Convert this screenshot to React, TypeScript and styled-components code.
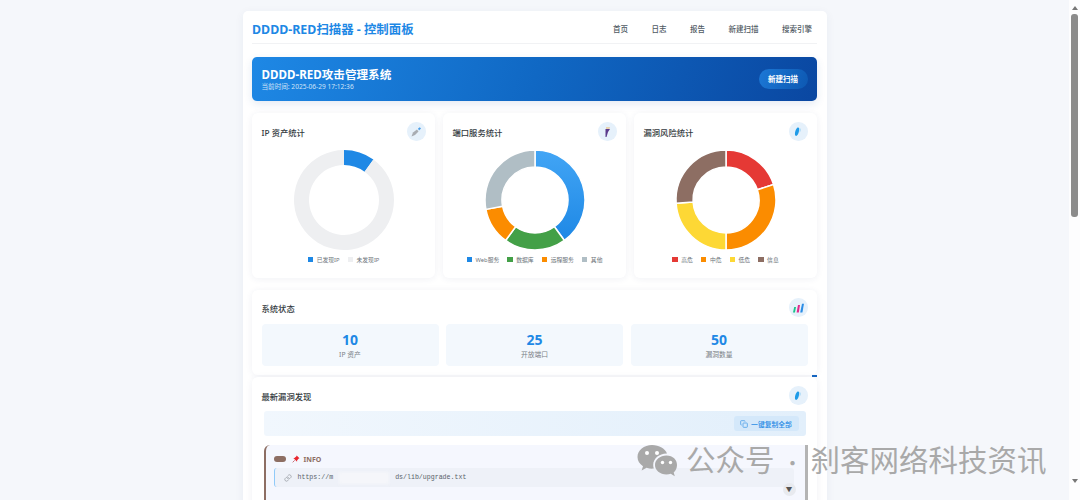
import * as React from 'react';
import styled, { createGlobalStyle } from 'styled-components';

const fontStack = '"Noto Sans", "Noto Sans CJK SC", sans-serif';

const GlobalStyle = createGlobalStyle`
  html, body {
    margin: 0;
    height: 500px;
    overflow: hidden;
    background: #f5f7fb;
    font-family: ${fontStack};
  }
`;

const Page = styled.div`
  display: flex;
  height: 500px;
  overflow: hidden;
  position: relative;
`;

const Main = styled.div`
  flex: 1;
  min-width: 0;
  padding-top: 11px;
  border-top: 0;
`;

const Container = styled.div`
  width: 584px;
  height: 520px;
  box-sizing: border-box;
  margin: 0 auto;
  padding: 0 9.5px;
  background: #fff;
  border-radius: 5px;
  box-shadow: 0 2px 10px rgba(40, 60, 110, 0.06);
`;

const Header = styled.div`
  display: flex;
  align-items: center;
  justify-content: space-between;
  height: 33px;
  padding-top: 3px;
  box-sizing: border-box;
  border-bottom: 1px solid #f1f2f4;
  margin-bottom: 12.5px;
`;

const Title = styled.div`
  font-size: 12.4px;
  font-weight: 700;
  color: #1e88e5;
`;

const Nav = styled.nav`
  display: flex;
  gap: 23.5px;
  padding-right: 5px;
`;

const NavLink = styled.a`
  font-size: 7.5px;
  font-weight: 500;
  color: #4f5a63;
`;

const Hero = styled.div`
  display: flex;
  align-items: center;
  justify-content: space-between;
  height: 44px;
  padding: 0 9.5px;
  box-sizing: border-box;
  border-radius: 5px;
  background: linear-gradient(110deg, #1e88e5 0%, #1068c4 50%, #0a47a1 100%);
  box-shadow: 0 3px 8px rgba(30, 80, 160, 0.12);
  margin-bottom: 12px;
`;

const HeroTitle = styled.div`
  font-size: 11.6px;
  line-height: 15px;
  font-weight: 700;
  color: #fff;
`;

const HeroTime = styled.div`
  font-size: 6.6px;
  line-height: 9px;
  color: #cfe3f8;
`;

const HeroButton = styled.button`
  border: 0;
  width: 49px;
  height: 20px;
  padding: 0;
  border-radius: 10px;
  background: linear-gradient(110deg, #1c78d6, #0d58b2);
  color: #fff;
  font-family: inherit;
  font-size: 7.5px;
  font-weight: 700;
`;

const CardGrid = styled.div`
  display: grid;
  grid-template-columns: repeat(3, 183px);
  gap: 8px;
  margin-bottom: 12px;
`;

const Panel = styled.section`
  background: #fff;
  border-radius: 6px;
  box-shadow: 0 1px 7px rgba(40, 60, 110, 0.07);
  padding: 9.5px;
  box-sizing: border-box;
  position: relative;
`;

const ChartCard = styled(Panel)`
  height: 165px;
`;

const PanelHead = styled.div`
  display: flex;
  align-items: center;
  justify-content: space-between;
  height: 19px;
`;

const PanelTitle = styled.h3`
  margin: 0;
  font-size: 8.3px;
  font-weight: 500;
  color: #333a40;
`;

const IconRound = styled.div`
  width: 18.5px;
  height: 18.5px;
  border-radius: 50%;
  background: #e6f1fb;
  display: flex;
  align-items: center;
  justify-content: center;
`;

const ChartWrap = styled.div`
  display: flex;
  justify-content: center;
  margin-top: 4px;
`;

const Legend = styled.div`
  display: flex;
  justify-content: center;
  gap: 8px;
  margin-top: 0;
  height: 9px;
  align-items: center;
`;

const LegendItem = styled.div`
  display: flex;
  align-items: center;
  gap: 3.5px;
  font-size: 5.8px;
  color: #6d747a;
`;

const Swatch = styled.i<{ $color: string }>`
  width: 5.5px;
  height: 5.5px;
  background: ${(p) => p.$color};
`;

const StatusPanel = styled(Panel)`
  height: 85px;
  margin-bottom: 2px;
  padding-top: 8.5px;
`;

const StatRow = styled.div`
  display: grid;
  grid-template-columns: repeat(3, 1fr);
  gap: 7.5px;
  margin-top: 7px;
`;

const StatTile = styled.div`
  height: 42px;
  border-radius: 4px;
  background: #f3f8fd;
  display: flex;
  flex-direction: column;
  align-items: center;
  justify-content: center;
`;

const StatValue = styled.div`
  font-size: 14px;
  line-height: 19px;
  font-weight: 700;
  color: #1e88e5;
`;

const StatLabel = styled.div`
  font-size: 6.8px;
  line-height: 11px;
  color: #7b8187;
`;

const VulnPanel = styled(Panel)`
  padding-top: 9.5px;
  height: 140px;
`;

const Sliver = styled.span`
  position: absolute;
  top: -2px;
  right: 0;
  width: 5px;
  height: 2px;
  background: #1565c0;
`;

const Toolbar = styled.div`
  display: flex;
  justify-content: flex-end;
  align-items: center;
  height: 25px;
  margin: 6px 2px 9px 2.5px;
  padding-right: 7px;
  border-radius: 3px;
  background: linear-gradient(90deg, #f1f7fd, #e2effb);
`;

const CopyButton = styled.button`
  display: flex;
  align-items: center;
  justify-content: center;
  gap: 3px;
  width: 65px;
  height: 15px;
  padding: 0;
  border: 0;
  border-radius: 3px;
  background: #d4e8fa;
  color: #1e88e5;
  font-family: inherit;
  font-size: 6.8px;
  font-weight: 500;
`;

const VulnCard = styled.article`
  margin-left: 2px;
  margin-right: 0;
  height: 90px;
  box-sizing: border-box;
  padding: 9px 11px 0 8px;
  background: #f5f7fe;
  border-left: 2px solid #8d6e63;
  border-right: 3px solid #b4b4b4;
  border-top-left-radius: 6px;
  position: relative;
`;

const VulnHead = styled.div`
  display: flex;
  align-items: center;
  height: 10px;
`;

const SeverityPill = styled.span`
  width: 12px;
  height: 6px;
  border-radius: 3px;
  background: #8d6e63;
  margin-right: 6px;
`;

const SeverityName = styled.span`
  margin-left: 4px;
  font-size: 7px;
  font-weight: 700;
  color: #8d6e63;
`;

const UrlBox = styled.div`
  display: flex;
  align-items: center;
  gap: 6px;
  height: 19px;
  margin-top: 4px;
  padding-left: 9px;
  border-left: 1.5px solid #90caf9;
  border-radius: 3px;
  background: #eef1f8;
  font-family: "Liberation Mono", monospace;
  font-size: 6.6px;
  color: #59626a;
`;

const UrlMasked = styled.span`
  display: inline-block;
  width: 50px;
  height: 12px;
  background: #f5f6fa;
  filter: blur(1.5px);
`;

const MiniScrollDown = styled.span`
  position: absolute;
  right: 9px;
  top: 38px;
  width: 13px;
  height: 13px;
  border-radius: 50%;
  background: #e8eaef;
  color: #555;
  font-size: 6.5px;
  line-height: 13px;
  text-align: center;
`;

const Rail = styled.aside`
  width: 11px;
  flex: none;
  background: #fdfdfe;
  display: flex;
  flex-direction: column;
  align-items: center;
  padding-top: 6px;
  box-sizing: border-box;
  position: relative;
`;

const RailArrow = styled.span<{ $down?: boolean }>`
  width: 0;
  height: 0;
  border-left: 3.5px solid transparent;
  border-right: 3.5px solid transparent;
  ${(p) => (p.$down ? 'border-top: 4px solid #777;' : 'border-bottom: 4px solid #777;')}
`;

const RailThumb = styled.div`
  width: 6.5px;
  height: 203px;
  margin-top: 4px;
  margin-bottom: 262px;
  border-radius: 3px;
  background: #8b8b8b;
`;

const Watermark = styled.div`
  position: absolute;
  left: 637px;
  top: 438px;
  display: flex;
  align-items: center;
  gap: 9px;
  color: #a9a9a9;
  font-family: "Noto Sans CJK SC", sans-serif;
  font-size: 29.5px;
  line-height: 40px;
  white-space: nowrap;
  pointer-events: none;
`;

const Dot = styled.span`
  margin: 0 8px 0 8px;
  font-size: 20px;
`;

interface Segment {
  value: number;
  color: string;
}

// angle in degrees, clockwise from the top
const polar = (cx: number, cy: number, r: number, a: number) => {
  const rad = ((a - 90) * Math.PI) / 180;
  return `${(cx + r * Math.cos(rad)).toFixed(2)} ${(cy + r * Math.sin(rad)).toFixed(2)}`;
};

const arcPath = (outer: number, inner: number, from: number, to: number) => {
  const large = to - from > 180 ? 1 : 0;
  return [
    `M${polar(55, 55, outer, from)}`,
    `A${outer} ${outer} 0 ${large} 1 ${polar(55, 55, outer, to)}`,
    `L${polar(55, 55, inner, to)}`,
    `A${inner} ${inner} 0 ${large} 0 ${polar(55, 55, inner, from)}`,
    'Z',
  ].join(' ');
};

const Donut = ({ segments, inner, gap, id }: { segments: Segment[]; inner: number; gap: number; id: string }) => {
  const total = segments.reduce((s, x) => s + x.value, 0);
  let angle = 0;
  return (
    <svg width="110" height="110" viewBox="0 0 110 110">
      <defs>
        <linearGradient id={id} x1="0" y1="0" x2="0" y2="1">
          <stop offset="0" stopColor="#42a5f5" />
          <stop offset="1" stopColor="#1e88e5" />
        </linearGradient>
      </defs>
      {segments.map((s, i) => {
        const from = angle;
        angle += (s.value / total) * 360;
        return (
          <path
            key={i}
            d={arcPath(50, inner, from, angle)}
            fill={s.color === 'gradient' ? `url(#${id})` : s.color}
            stroke="#fff"
            strokeWidth={gap}
            strokeLinejoin="round"
          />
        );
      })}
    </svg>
  );
};

const ScopeIcon = () => (
  <svg width="12" height="12" viewBox="0 0 12 12">
    <path d="M1.5 10.5 L3 6.5 L7 3.5 L8.5 5.5 L5 9 Z" fill="#a8acb2" />
    <path d="M8 2.5 L9.8 1.2 L11 2.6 L9 4.5 Z" fill="#4c9fe8" />
  </svg>
);

const BoltIcon = () => (
  <svg width="12" height="12" viewBox="0 0 12 12">
    <path d="M5 1 L9 1 L8.5 3 L5 3 Z" fill="#e8d3b0" />
    <path d="M4.5 3 L9 3 L7 6 L5.5 11 L4.5 11 Z" fill="#5b3a8c" />
  </svg>
);

const ShieldIcon = () => (
  <svg width="12" height="12" viewBox="0 0 12 12">
    <path d="M5 2 C7 0.8 7.6 2.5 7 5 C6.5 8 5 10.5 3.6 9.8 C2.4 9 3 4 5 2 Z" fill="#1e9be8" />
    <path d="M7.4 2 C9.4 2.5 9 5 7.6 6.6 Z" fill="#a8d8f5" />
  </svg>
);

const BarsIcon = () => (
  <svg width="13" height="12" viewBox="0 0 13 12">
    <path d="M1 10.5 L2.2 5 L4 5 L3 10.5 Z" fill="#19c28c" />
    <path d="M4.6 10.5 L6 3 L8 3 L6.8 10.5 Z" fill="#e0288c" />
    <path d="M8.2 10.5 L10 1.8 L12 1.8 L10.4 10.5 Z" fill="#2a8de6" />
  </svg>
);

const CopyIcon = () => (
  <svg width="8" height="8" viewBox="0 0 24 24" fill="none" stroke="#4d9fe8" strokeWidth="2.4">
    <rect x="9" y="9" width="13" height="13" rx="2" />
    <path d="M5 15H4a2 2 0 0 1-2-2V4a2 2 0 0 1 2-2h9a2 2 0 0 1 2 2v1" />
  </svg>
);

const LinkIcon = () => (
  <svg width="8" height="8" viewBox="0 0 24 24" fill="none" stroke="#9aa0a6" strokeWidth="2.4" strokeLinecap="round">
    <path d="M10 13a5 5 0 0 0 7.5.5l3-3a5 5 0 0 0-7-7l-1.7 1.7" />
    <path d="M14 11a5 5 0 0 0-7.5-.5l-3 3a5 5 0 0 0 7 7l1.7-1.7" />
  </svg>
);

const PinIcon = () => (
  <svg width="8" height="8" viewBox="0 0 12 12">
    <path d="M7 0.8 L11.2 5 L9.6 5.6 L7.6 8.4 L7.6 10 L2 4.4 L3.6 4.4 L6.4 2.4 Z" fill="#e8262f" />
    <path d="M4 8 L1 11" stroke="#b03038" strokeWidth="1" />
  </svg>
);

const WeChatIcon = () => (
  <svg width="40" height="34" viewBox="0 0 40 34">
    <path d="M15 1 C7 1 0.5 6.3 0.5 13 C0.5 16.8 2.6 20 6 22.2 L4.6 26.6 L9.6 23.8 C11.4 24.4 13.2 24.7 15 24.7 C15.6 24.7 16.2 24.7 16.8 24.6 C16.4 23.4 16.2 22.2 16.2 21 C16.2 14.6 22.2 9.6 29.6 9.6 L30 9.6 C28.4 4.6 22.2 1 15 1 Z" fill="#a9a9a9" />
    <circle cx="10" cy="9" r="2" fill="#fff" />
    <circle cx="20" cy="9" r="2" fill="#fff" />
    <path d="M29.5 11.5 C23 11.5 18 15.8 18 21 C18 26.2 23 30.5 29.5 30.5 C31 30.5 32.4 30.2 33.8 29.8 L37.8 32.2 L36.7 28.4 C38.7 26.6 40 24 40 21 C40 15.8 36 11.5 29.5 11.5 Z" fill="#a9a9a9" />
    <circle cx="25.5" cy="18.5" r="1.7" fill="#fff" />
    <circle cx="33.5" cy="18.5" r="1.7" fill="#fff" />
  </svg>
);

const charts = [
  {
    title: 'IP 资产统计',
    icon: <ScopeIcon />,
    inner: 35,
    gap: 0,
    segments: [
      { value: 10, color: '#1e88e5' },
      { value: 90, color: '#eeeff1' },
    ],
    legend: ['已发现IP', '未发现IP'],
    legendColors: ['#1e88e5', '#eeeff1'],
  },
  {
    title: '端口服务统计',
    icon: <BoltIcon />,
    inner: 33,
    gap: 1.5,
    segments: [
      { value: 10, color: 'gradient' },
      { value: 5, color: '#43a047' },
      { value: 3, color: '#fb8c00' },
      { value: 7, color: '#b0bec5' },
    ],
    legend: ['Web服务', '数据库', '远程服务', '其他'],
    legendColors: ['#1e88e5', '#43a047', '#fb8c00', '#b0bec5'],
  },
  {
    title: '漏洞风险统计',
    icon: <ShieldIcon />,
    inner: 33,
    gap: 1.5,
    segments: [
      { value: 10, color: '#e53935' },
      { value: 15, color: '#fb8c00' },
      { value: 12, color: '#fdd835' },
      { value: 13, color: '#8d6e63' },
    ],
    legend: ['高危', '中危', '低危', '信息'],
    legendColors: ['#e53935', '#fb8c00', '#fdd835', '#8d6e63'],
  },
];

const stats = [
  { value: 10, label: 'IP 资产' },
  { value: 25, label: '开放端口' },
  { value: 50, label: '漏洞数量' },
];

export default function App() {
  return (
    <>
      <GlobalStyle />
      <Page>
        <Main>
          <Container>
            <Header>
              <Title>DDDD-RED扫描器 - 控制面板</Title>
              <Nav>
                {['首页', '日志', '报告', '新建扫描', '搜索引擎'].map((n) => (
                  <NavLink key={n}>{n}</NavLink>
                ))}
              </Nav>
            </Header>
            <Hero>
              <div>
                <HeroTitle>DDDD-RED攻击管理系统</HeroTitle>
                <HeroTime>当前时间: 2025-06-29 17:12:36</HeroTime>
              </div>
              <HeroButton>新建扫描</HeroButton>
            </Hero>
            <CardGrid>
              {charts.map((c, i) => (
                <ChartCard key={c.title}>
                  <PanelHead>
                    <PanelTitle>{c.title}</PanelTitle>
                    <IconRound>{c.icon}</IconRound>
                  </PanelHead>
                  <ChartWrap>
                    <Donut segments={c.segments} inner={c.inner} gap={c.gap} id={`fill${i}`} />
                  </ChartWrap>
                  <Legend>
                    {c.legend.map((l, j) => (
                      <LegendItem key={l}>
                        <Swatch $color={c.legendColors[j]} />
                        {l}
                      </LegendItem>
                    ))}
                  </Legend>
                </ChartCard>
              ))}
            </CardGrid>
            <StatusPanel>
              <PanelHead>
                <PanelTitle>系统状态</PanelTitle>
                <IconRound>
                  <BarsIcon />
                </IconRound>
              </PanelHead>
              <StatRow>
                {stats.map((s) => (
                  <StatTile key={s.label}>
                    <StatValue>{s.value}</StatValue>
                    <StatLabel>{s.label}</StatLabel>
                  </StatTile>
                ))}
              </StatRow>
            </StatusPanel>
            <VulnPanel>
              <Sliver />
              <PanelHead>
                <PanelTitle>最新漏洞发现</PanelTitle>
                <IconRound>
                  <ShieldIcon />
                </IconRound>
              </PanelHead>
              <Toolbar>
                <CopyButton>
                  <CopyIcon />
                  一键复制全部
                </CopyButton>
              </Toolbar>
              <VulnCard>
                <VulnHead>
                  <SeverityPill />
                  <PinIcon />
                  <SeverityName>INFO</SeverityName>
                </VulnHead>
                <UrlBox>
                  <LinkIcon />
                  <span>https://m</span>
                  <UrlMasked />
                  <span>ds/lib/upgrade.txt</span>
                </UrlBox>
                <MiniScrollDown>▼</MiniScrollDown>
              </VulnCard>
            </VulnPanel>
          </Container>
        </Main>
        <Rail>
          <RailArrow />
          <RailThumb />
          <RailArrow $down />
        </Rail>
        <Watermark>
          <WeChatIcon />
          <span>
            公众号<Dot>·</Dot>刹客网络科技资讯
          </span>
        </Watermark>
      </Page>
    </>
  );
}
